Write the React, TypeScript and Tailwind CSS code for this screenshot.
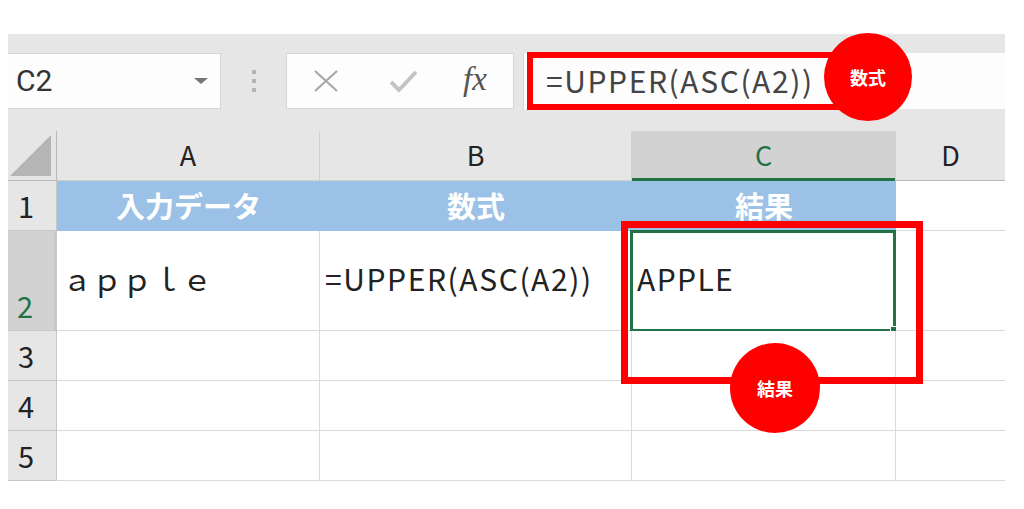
import React from "react";

const jp = "font-['Noto_Sans_CJK_JP',sans-serif]";

function ColHeader({ label, selected, last }: { label: string; selected?: boolean; last?: boolean }) {
  return (
    <div
      className={`relative flex items-center justify-center ${jp} text-[27px] leading-none ${
        selected ? "bg-[#d2d2d2] text-[#217346]" : "bg-[#e6e6e6] text-[#222]"
      } ${last ? "" : "border-r border-[#d0d0d0]"} border-b border-[#b8b8b8]`}
    >
      <span className="pb-[2px]">{label}</span>
      {selected && <div className="absolute left-0 right-0 bottom-[-1px] h-[3px] bg-[#217346]" />}
    </div>
  );
}

function RowHeader({ n, selected, tall }: { n: number; selected?: boolean; tall?: boolean }) {
  return (
    <div
      className={`flex justify-center pr-[12px] ${jp} text-[29px] leading-none ${
        tall ? "items-end pb-[10px]" : "items-center"
      } ${selected ? "bg-[#d2d2d2] text-[#217346] border-r-[3px] border-[#217346]" : "bg-[#e6e6e6] text-[#222] border-r border-[#b8b8b8]"} border-b border-[#c8c8c8]`}
    >
      {n}
    </div>
  );
}

function Cell({ children, last, className = "" }: { children?: React.ReactNode; last?: boolean; className?: string }) {
  return (
    <div
      className={`relative bg-white flex items-center ${last ? "" : "border-r border-[#dadada]"} border-b border-[#dadada] ${className}`}
    >
      {children}
    </div>
  );
}

function BlueCell({ children }: { children: React.ReactNode }) {
  return (
    <div className={`bg-[#9bc2e6] flex items-center justify-center ${jp} text-[29px] font-bold text-white leading-none pb-[2px]`}>
      {children}
    </div>
  );
}

export default function App() {
  return (
    <div className="relative w-[1024px] h-[509px] bg-white overflow-hidden">
      <div className="pt-[34px] pl-[8px]">
        <div className="w-[997px] bg-[#e6e6e6]">
          {/* toolbar */}
          <div className="flex items-start h-[97px] pt-[19px]">
            <div className="w-[213px] h-[56px] bg-[#fdfdfd] border border-l-0 border-[#d6d6d6] flex items-center justify-between pl-[8px] pr-[12px]">
              <span className="font-['Roboto',sans-serif] text-[30px] text-[#333] leading-none">C2</span>
              <svg width="14" height="7" viewBox="0 0 14 7">
                <path d="M0 0 L14 0 L7 6 Z" fill="#777" />
              </svg>
            </div>
            <div className="w-[65px] h-[56px] flex flex-col items-center justify-center gap-[5px]">
              <div className="w-[4px] h-[4px] bg-[#b4b4b4]" />
              <div className="w-[4px] h-[4px] bg-[#b4b4b4]" />
              <div className="w-[4px] h-[4px] bg-[#b4b4b4]" />
            </div>
            <div className="w-[228px] h-[56px] bg-[#fdfdfd] border border-[#d6d6d6] flex items-center">
              <svg className="ml-[26px]" width="26" height="24" viewBox="0 0 26 24">
                <path d="M2 2 L24 22 M24 2 L2 22" stroke="#a8a8a8" strokeWidth="2.2" fill="none" />
              </svg>
              <svg className="ml-[50px]" width="30" height="24" viewBox="0 0 30 24">
                <path d="M2 13 L10 21 L27 3" stroke="#c4c4c4" strokeWidth="4" fill="none" />
              </svg>
              <span className="ml-[44px] font-['Liberation_Serif',serif] italic text-[33px] text-[#555] leading-none pb-[4px]">fx</span>
            </div>
            <div className="w-[9px]" />
            <div className="flex-1 h-[56px] bg-[#fdfdfd] border-l border-[#d6d6d6] flex items-center pl-[22px]">
              <span className={`${jp} text-[30px] tracking-[1.6px] text-[#444] leading-none pb-[2px]`}>=UPPER(ASC(A2))</span>
            </div>
          </div>

          {/* grid */}
          <div className="grid grid-cols-[49px_263px_312px_264px_109px] grid-rows-[50px_50px_100px_50px_50px_50px]">
            {/* header */}
            <div className="bg-[#e6e6e6] border-r border-[#b8b8b8] border-b border-[#b8b8b8] flex items-end justify-end pr-[4px] pb-[3px]">
              <svg width="42" height="42" viewBox="0 0 42 42">
                <path d="M41 0 L41 41 L0 41 Z" fill="#b5b5b5" />
              </svg>
            </div>
            <ColHeader label="A" />
            <ColHeader label="B" />
            <ColHeader label="C" selected />
            <ColHeader label="D" last />

            {/* row 1 */}
            <RowHeader n={1} />
            <BlueCell>入力データ</BlueCell>
            <BlueCell>数式</BlueCell>
            <BlueCell>結果</BlueCell>
            <Cell last />

            {/* row 2 */}
            <RowHeader n={2} selected tall />
            <Cell className={`${jp} text-[30px] text-[#222] pl-[5px] pb-[4px]`}>ａｐｐｌｅ</Cell>
            <Cell className={`${jp} text-[30px] tracking-[1.6px] text-[#222] pl-[5px] pb-[4px]`}>=UPPER(ASC(A2))</Cell>
            <Cell className={`${jp} text-[30px] tracking-[1.4px] text-[#222] pl-[5px] pb-[4px]`}>
              APPLE
              <div className="absolute left-[-2px] top-[-1px] right-[-1px] bottom-[-2px] border-[3px] border-[#217346]" />
              <div className="absolute right-[-4px] bottom-[-5px] w-[9px] h-[9px] bg-[#217346] border border-white" />
            </Cell>
            <Cell last />

            {/* rows 3-5 */}
            {[3, 4, 5].map((n) => (
              <React.Fragment key={n}>
                <RowHeader n={n} />
                <Cell />
                <Cell />
                <Cell />
                <Cell last />
              </React.Fragment>
            ))}
          </div>
        </div>
      </div>

      {/* annotations */}
      <div className="absolute left-[527px] top-[52px] w-[320px] h-[58px] border-[6px] border-[#ff0000]" />
      <div className={`absolute left-[824px] top-[33px] w-[88px] h-[88px] rounded-full bg-[#ff0000] flex items-center justify-center ${jp} text-[18px] font-bold text-white`}>
        数式
      </div>
      <div className="absolute left-[621px] top-[221px] w-[302px] h-[163px] border-[7px] border-[#ff0000]" />
      <div className={`absolute left-[730px] top-[343px] w-[90px] h-[90px] rounded-full bg-[#ff0000] flex items-center justify-center ${jp} text-[18px] font-bold text-white`}>
        結果
      </div>
    </div>
  );
}
